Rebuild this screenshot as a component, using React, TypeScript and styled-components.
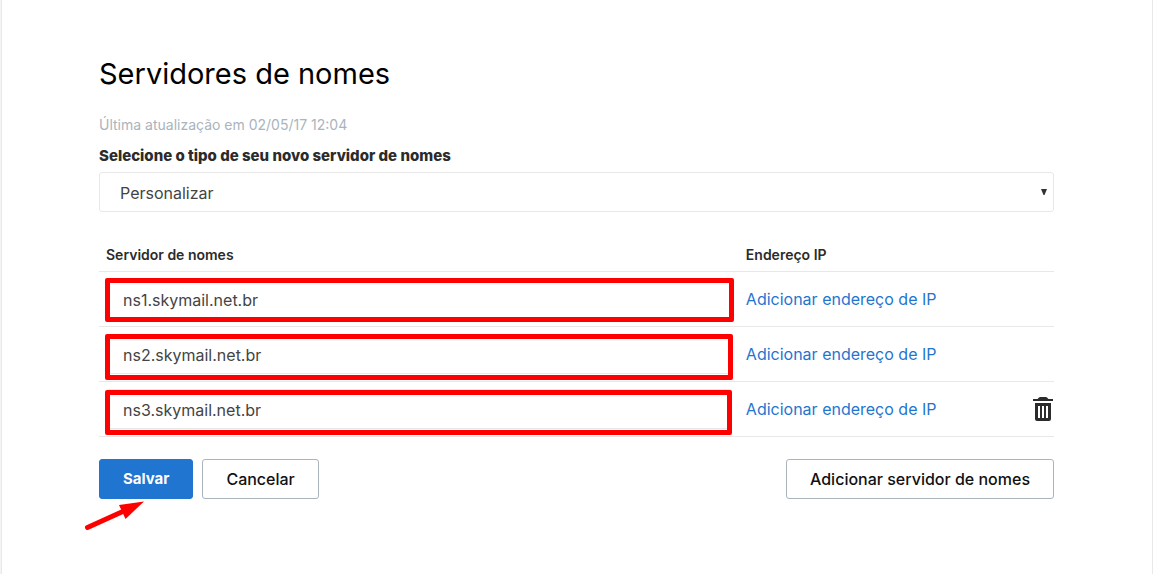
import React from "react";
import styled, { createGlobalStyle } from "styled-components";

const GlobalStyle = createGlobalStyle`
  * { box-sizing: border-box; }
  body {
    margin: 0;
    background: #f4f4f4;
    color: #2b2b2b;
    font-family: Inter, "Liberation Sans", sans-serif;
    font-size: 16px;
    line-height: 24px;
  }
  button, input, select { font: inherit; }
`;

const Page = styled.div`
  min-height: 100vh;
  padding-left: 1px;
  display: flex;
`;

const Panel = styled.main`
  flex: 1;
  padding: 54px 98px 75px 97px;
  border-left: 1px solid #e8e8e8;
  border-right: 1px solid #e8e8e8;
  background: #fff;
`;

const Title = styled.h1`
  margin: 0 0 21px;
  color: #000;
  font-size: 29px;
  font-weight: 400;
  line-height: 40px;
`;

const Updated = styled.p`
  margin: 0 0 9px;
  color: #a9b4be;
  font-size: 14px;
  line-height: 20px;
`;

const Label = styled.label`
  display: block;
  margin-bottom: 4px;
  font-size: 15px;
  font-weight: 800;
`;

const SelectBox = styled.div`
  position: relative;
  margin-bottom: 27px;
`;

const Select = styled.select`
  display: block;
  width: 100%;
  height: 40px;
  padding: 2px 20px 0;
  border: 1px solid #e8e8e8;
  border-radius: 3px;
  background: #fff;
  color: #444;
  appearance: none;
`;

const Caret = styled.svg`
  position: absolute;
  top: 17px;
  right: 7px;
  pointer-events: none;
`;

const Table = styled.table`
  width: 100%;
  margin-bottom: 22px;
  border-collapse: separate;
  border-spacing: 0;
  table-layout: fixed;
`;

const HeadCell = styled.th<{ $width: string }>`
  width: ${(p) => p.$width};
  height: 33px;
  padding: 0 7px;
  border-bottom: 1px solid #e8e8e8;
  font-size: 14px;
  font-weight: 600;
  line-height: 20px;
  text-align: left;
`;

const Cell = styled.td`
  position: relative;
  height: 55px;
  padding: 0 7px;
  border-bottom: 1px solid #e8e8e8;
`;

const ActionCell = styled(Cell)`
  padding: 0 1px 2px;
  text-align: right;
`;

const NameInput = styled.input`
  display: block;
  width: 100%;
  height: 40px;
  padding: 2px 16px 0;
  border: 1px solid #e8e8e8;
  border-radius: 3px;
  background: #fff;
  color: #444;
`;

const Highlight = styled.span<{ $top: number; $right: number; $height: number }>`
  position: absolute;
  top: ${(p) => p.$top}px;
  left: 6px;
  right: ${(p) => p.$right}px;
  height: ${(p) => p.$height}px;
  border: 5px solid #f00;
  border-radius: 2px;
  pointer-events: none;
`;

const Link = styled.a`
  color: #1f75cf;
  text-decoration: none;
`;

const IconButton = styled.button`
  display: inline-flex;
  padding: 0;
  border: 0;
  background: none;
  color: #2b2b2b;
  vertical-align: middle;
`;

const Actions = styled.div`
  display: flex;
  flex-wrap: wrap;
  gap: 9px;
`;

const Spacer = styled.div`
  flex: 1;
`;

const Button = styled.button<{ $primary?: boolean }>`
  height: 40px;
  padding: 0 23px;
  border: 1px solid ${(p) => (p.$primary ? "#1f75cf" : "#a9b4be")};
  border-radius: 3px;
  background: ${(p) => (p.$primary ? "#1f75cf" : "#fff")};
  color: ${(p) => (p.$primary ? "#fff" : "#111")};
  font-size: ${(p) => (p.$primary ? 15 : 16)}px;
  font-weight: ${(p) => (p.$primary ? 700 : 500)};
`;

const Pointed = styled.div`
  position: relative;
`;

const Arrow = styled.svg`
  position: absolute;
  top: 40px;
  left: -16px;
`;

const servers = [
  { name: "ns1.skymail.net.br", top: 6, right: 5, height: 44, removable: false },
  { name: "ns2.skymail.net.br", top: 7, right: 6, height: 46, removable: false },
  { name: "ns3.skymail.net.br", top: 8, right: 7, height: 45, removable: true },
];

const Trash = () => (
  <svg width="20" height="24" viewBox="0 0 20 24" fill="currentColor" aria-hidden="true">
    <path d="M4.5 2 6 0.5Q6.5 0 7 0H13Q13.500 0 14 0.500L15.500 2H20V4H0V2Z" />
    <path
      fillRule="evenodd"
      d="M2 6H18V22Q18 24 16 24H4Q2 24 2 22ZM5 9V21H7V9ZM9 9V21H11V9ZM13 9V21H15V9Z"
    />
  </svg>
);

export default function App() {
  return (
    <Page>
      <GlobalStyle />
      <Panel>
        <Title>Servidores de nomes</Title>
        <Updated>Última atualização em 02/05/17 12:04</Updated>
        <Label htmlFor="type">Selecione o tipo de seu novo servidor de nomes</Label>
        <SelectBox>
          <Select id="type" defaultValue="custom">
            <option value="custom">Personalizar</option>
          </Select>
          <Caret width="6" height="6" viewBox="0 0 6 6" aria-hidden="true">
            <path d="M0 0H6L3.5 6H2.5Z" fill="#333" />
          </Caret>
        </SelectBox>
        <Table>
          <thead>
            <tr>
              <HeadCell $width="67%">Servidor de nomes</HeadCell>
              <HeadCell $width="26%">Endereço IP</HeadCell>
              <HeadCell as="td" $width="7%" />
            </tr>
          </thead>
          <tbody>
            {servers.map((s) => (
              <tr key={s.name}>
                <Cell>
                  <NameInput aria-label="Servidor de nomes" defaultValue={s.name} />
                  <Highlight $top={s.top} $right={s.right} $height={s.height} />
                </Cell>
                <Cell>
                  <Link href="#">Adicionar endereço de IP</Link>
                </Cell>
                <ActionCell>
                  {s.removable && (
                    <IconButton type="button" aria-label="Excluir">
                      <Trash />
                    </IconButton>
                  )}
                </ActionCell>
              </tr>
            ))}
          </tbody>
        </Table>
        <Actions>
          <Pointed>
            <Button type="button" $primary>Salvar</Button>
            <Arrow width="64" height="34" viewBox="0 0 64 34" aria-hidden="true">
              <path d="M4.500 28.500 42 11.500" stroke="#f00" strokeWidth="5" strokeLinecap="round" />
              <path d="M61 2.500 36 6 42.500 20Z" fill="#f00" />
            </Arrow>
          </Pointed>
          <Button type="button">Cancelar</Button>
          <Spacer />
          <Button type="button">Adicionar servidor de nomes</Button>
        </Actions>
      </Panel>
    </Page>
  );
}
